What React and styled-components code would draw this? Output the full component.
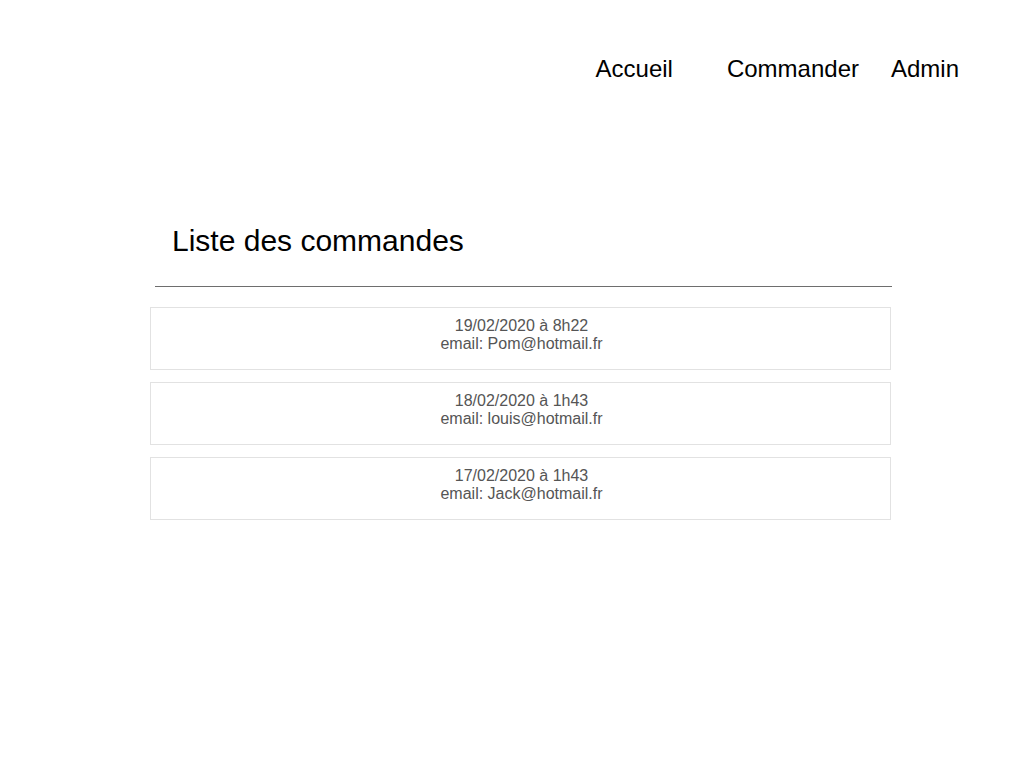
import React from "react";
import styled, { createGlobalStyle } from "styled-components";

const GlobalStyle = createGlobalStyle`
  body {
    margin: 0;
    background: #fff;
    font-family: "Liberation Sans", Arial, sans-serif;
  }
`;

const orders = [
  { date: "19/02/2020 à 8h22", email: "Pom@hotmail.fr" },
  { date: "18/02/2020 à 1h43", email: "louis@hotmail.fr" },
  { date: "17/02/2020 à 1h43", email: "Jack@hotmail.fr" },
];

const links = [
  { label: "Accueil", space: 0 },
  { label: "Commander", space: 54 },
  { label: "Admin", space: 32 },
];

function App() {
  return (
    <>
      <GlobalStyle />
      <Header>
        <Nav>
          {links.map(({ label, space }) => (
            <NavLink key={label} href="#" $space={space}>
              {label}
            </NavLink>
          ))}
        </Nav>
      </Header>
      <Main>
        <Title>Liste des commandes</Title>
        <Rule />
        <List>
          {orders.map(({ date, email }) => (
            <Order key={date}>
              <Line>{date}</Line>
              <Line>email: {email}</Line>
            </Order>
          ))}
        </List>
      </Main>
    </>
  );
}

const Header = styled.header`
  display: flex;
  justify-content: flex-end;
  padding: 55px 65px 0 0;
`;

const Nav = styled.nav`
  display: flex;
  align-items: baseline;
`;

const NavLink = styled.a`
  margin-left: ${(p) => p.$space}px;
  font-size: 24px;
  color: #000;
  text-decoration: none;
`;

const Main = styled.main`
  width: 742px;
  margin: 141px 0 0 150px;
`;

const Title = styled.h1`
  margin: 0;
  padding-left: 22px;
  font-size: 30px;
  font-weight: normal;
  color: #000;
`;

const Rule = styled.div`
  height: 1px;
  margin: 28px 0 20px 5px;
  background: #6e6e6e;
`;

const List = styled.div`
  display: flex;
  flex-direction: column;
  gap: 12px;
`;

const Order = styled.div`
  width: 741px;
  box-sizing: border-box;
  padding: 9px 0 16px 2px;
  border: 1px solid #e2e2e2;
  text-align: center;
  color: #555;
  font-size: 16px;
`;

const Line = styled.div`
  line-height: 18px;
`;

export default App;
